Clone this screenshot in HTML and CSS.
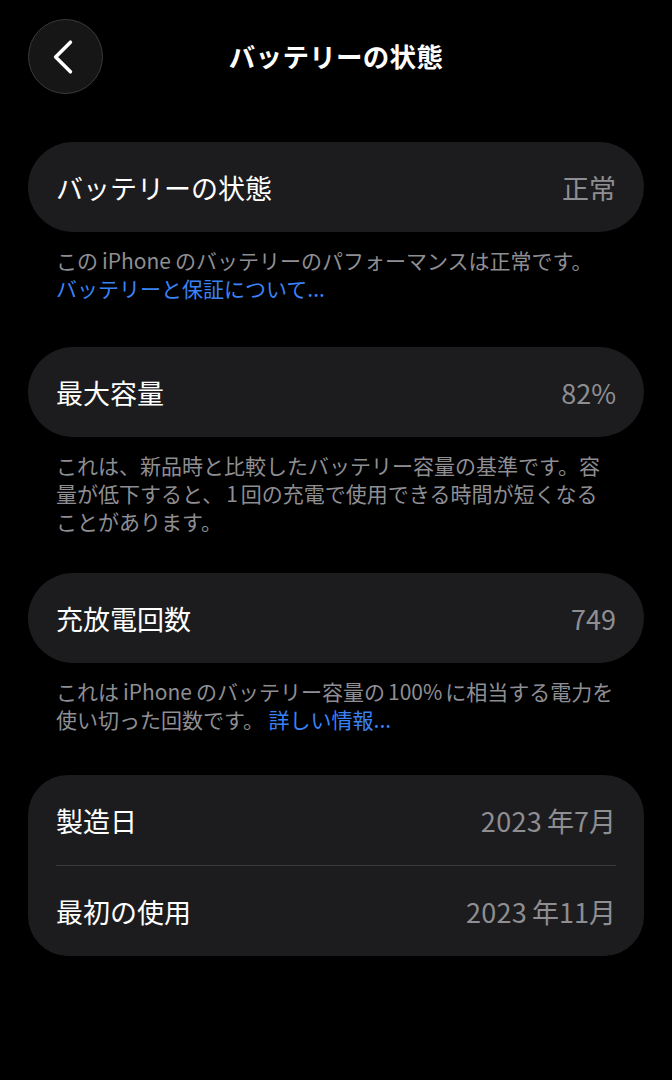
FILE: index.html
```html
<!DOCTYPE html>
<html lang="ja">
<head>
<meta charset="utf-8">
<title>バッテリーの状態</title>
<link rel="stylesheet" href="styles.css">
</head>
<body>
<div class="screen">
  <header class="nav">
    <button class="back" aria-label="戻る">
      <svg width="74" height="74" viewBox="0 0 74 74">
        <path d="M42 22 L27 37 L42 52" fill="none" stroke="#ffffff" stroke-width="3.6" stroke-linecap="round" stroke-linejoin="round"/>
      </svg>
    </button>
    <h1 class="title">バッテリーの状態</h1>
    <span class="spacer"></span>
  </header>

  <section class="group group-health">
    <div class="card">
      <div class="row"><span class="label">バッテリーの状態</span><span class="value">正常</span></div>
    </div>
    <p class="note">この<span class="lat">iPhone</span>のバッテリーのパフォーマンスは正常です。<br><a class="link" href="#">バッテリーと保証について...</a></p>
  </section>

  <section class="group group-capacity">
    <div class="card">
      <div class="row"><span class="label">最大容量</span><span class="value">82%</span></div>
    </div>
    <p class="note">これは、新品時と比較したバッテリー容量の基準です。容量が低下すると、<span class="lat-n">1</span>回の充電で使用できる時間が短くなることがあります。</p>
  </section>

  <section class="group">
    <div class="card">
      <div class="row"><span class="label">充放電回数</span><span class="value">749</span></div>
    </div>
    <p class="note">これは<span class="lat">iPhone</span>のバッテリー容量の<span class="lat-l">100%</span>に相当する電力を使い切った回数です。 <a class="link" href="#">詳しい情報...</a></p>
  </section>

  <section class="group">
    <div class="card card-list">
      <div class="row"><span class="label">製造日</span><span class="value"><span class="num">2023</span>年7月</span></div>
      <div class="divider"></div>
      <div class="row"><span class="label">最初の使用</span><span class="value"><span class="num">2023</span>年11月</span></div>
    </div>
  </section>
</div>
</body>
</html>
```

FILE: styles.css
```css
* { box-sizing: border-box; }

html, body {
  margin: 0;
  padding: 0;
  background: #000000;
}

body {
  font-family: "Noto Sans CJK JP", "Noto Sans", sans-serif;
  color: #ffffff;
  width: 672px;
  min-height: 1080px;
}

.screen {
  padding: 19px 28px 0;
}

.nav {
  display: grid;
  grid-template-columns: 74px 1fr 74px;
  align-items: center;
  height: 75px;
  margin-bottom: 48px;
}

.back {
  width: 75px;
  height: 75px;
  border-radius: 50%;
  background: #161617;
  border: 1px solid #3a3a3c;
  padding: 0;
  margin: 0;
  display: flex;
  align-items: center;
  justify-content: center;
}

.back svg { display: block; }

.title {
  margin: 0;
  text-align: center;
  font-size: 26.5px;
  font-weight: 700;
  line-height: 1;
  letter-spacing: 0.3px;
}

.group {
  margin-bottom: 42px;
}

.group-health {
  margin-bottom: 45px;
}

.group-capacity {
  margin-bottom: 38px;
}

.card {
  background: #1c1c1e;
  border-radius: 45px;
  padding: 0 28px;
}

.card-list {
  border-radius: 40px;
}

.row {
  height: 90px;
  display: flex;
  align-items: center;
  justify-content: space-between;
  font-size: 27px;
}

.label {
  color: #ffffff;
}

.value {
  color: #8e8e93;
}

.num {
  margin-right: 5px;
  letter-spacing: 0.3px;
}

.divider {
  height: 1px;
  background: #3a3a3c;
}

.note {
  margin: 14px 0 0;
  padding: 0 28px;
  font-size: 21px;
  line-height: 28px;
  color: #8e8e93;
}

.lat {
  margin: 0 4px;
}

.lat-l {
  margin: 0 3px;
}

.lat-n {
  margin: 0 3px;
}

.link {
  color: #3b82f6;
  text-decoration: none;
}
```
